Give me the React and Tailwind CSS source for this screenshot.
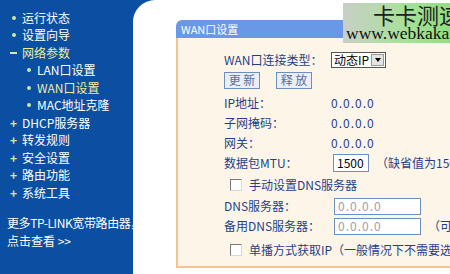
const font = { fontFamily: '"Noto Sans CJK SC", "Liberation Sans", sans-serif' }

const menu = [
  { label: '运行状态', mark: 'dot' },
  { label: '设置向导', mark: 'dot' },
  { label: '网络参数', mark: 'minus', active: true },
  { label: 'LAN口设置', mark: 'dot', sub: true },
  { label: 'WAN口设置', mark: 'dot', sub: true, active: true },
  { label: 'MAC地址克隆', mark: 'dot', sub: true },
  { label: 'DHCP服务器', mark: 'plus' },
  { label: '转发规则', mark: 'plus' },
  { label: '安全设置', mark: 'plus' },
  { label: '路由功能', mark: 'plus' },
  { label: '系统工具', mark: 'plus' },
]

const Mark = ({ type }) => {
  if (type === 'minus') return <span className="w-[7px] h-[2px] bg-[#d8e89a]" />
  if (type === 'plus') return <span className="text-[#d8e89a] text-[12px] font-bold leading-none w-[7px]">+</span>
  return <span className="w-[4px] h-[4px] rounded-full bg-[#c8e8a0]" />
}

const Row = ({ label, children }) => (
  <div className="flex items-center h-[20px]">
    <div className="w-[107px] text-[#1f3f8c]">{label}</div>
    {children}
  </div>
)

const Box = () => <span className="w-[12px] h-[12px] border border-[#7a7a7a] border-r-[#d8d8d8] border-b-[#d8d8d8] bg-white" />

export default function App() {
  return (
    <div className="w-[450px] h-[274px] bg-[#0b4fa3] flex overflow-hidden relative text-[12px]" style={font}>
      <div className="w-[133px] shrink-0 pt-[9px] pl-[9px] overflow-hidden whitespace-nowrap text-white">
        {menu.map((m) => (
          <div key={m.label} className={`flex items-center h-[17.5px] gap-[5px] ${m.sub ? 'pl-[16px]' : 'pl-[1px]'}`}>
            <span className="w-[7px] flex items-center justify-center"><Mark type={m.mark} /></span>
            <span className={m.active ? 'text-[#f0ec9a]' : 'text-white'}>{m.label}</span>
          </div>
        ))}
        <div className="mt-[12px] leading-[18px] -ml-[2px]">
          <div className="tracking-[-0.4px]">更多TP-LINK宽带路由器，</div>
          <div>点击查看 &gt;&gt;</div>
        </div>
      </div>
      <div className="flex-1 bg-white rounded-tl-[22px] pt-[20px] pl-[43px]">
        <div className="h-[18px] bg-[#6a98e6] rounded-tl-[6px] text-white text-[11px] flex items-center pl-[5px] whitespace-nowrap">WAN口设置</div>
        <div className="h-[230px] bg-[#fdf6e8] border-l-2 border-b-2 border-[#f3c48e] pl-[46px] pt-[12px] whitespace-nowrap">
          <Row label="WAN口连接类型：">
            <div className="flex items-center h-[16px] border border-[#555] bg-white">
              <span className="px-[2px] text-black leading-none">动态IP</span>
              <span className="w-[13px] h-[12px] mr-[1px] bg-[#e4e4e4] border border-[#999] flex items-center justify-center">
                <span className="border-l-[3px] border-r-[3px] border-t-[4px] border-l-transparent border-r-transparent border-t-black" />
              </span>
            </div>
          </Row>
          <div className="flex items-center h-[20px] gap-[16px]">
            {['更 新', '释 放'].map((b) => (
              <span key={b} className="w-[36px] h-[17px] border border-[#6d8fc0] bg-[#e9eef8] text-[#5a6e96] flex items-center justify-center leading-none">{b}</span>
            ))}
          </div>
          <div className="mt-[3px]">
            <Row label="IP地址："><span className="text-[#1f3f8c] tracking-[1px]">0.0.0.0</span></Row>
            <Row label="子网掩码："><span className="text-[#1f3f8c] tracking-[1px]">0.0.0.0</span></Row>
            <Row label="网关："><span className="text-[#1f3f8c] tracking-[1px]">0.0.0.0</span></Row>
            <Row label="数据包MTU：">
              <span className="ml-[2px] w-[36px] h-[18px] border border-[#6d8fc0] bg-white text-black flex items-center pl-[3px] leading-none">1500</span>
              <span className="ml-[7px] text-[#1f3f8c]">（缺省值为1500，如非必要，请勿修改）</span>
            </Row>
          </div>
          <div className="flex items-center h-[20px] mt-[2px] pl-[6px] gap-[7px] text-[#1f3f8c]">
            <Box />
            <span>手动设置DNS服务器</span>
          </div>
          <div className="mt-[1px]">
            <Row label="DNS服务器：">
              <span className="ml-[3px] w-[87px] h-[17px] border border-[#6d8fc0] bg-white text-[#a0a0a0] flex items-center pl-[3px] leading-none tracking-[1px]">0.0.0.0</span>
            </Row>
            <Row label="备用DNS服务器：">
              <span className="ml-[3px] w-[87px] h-[17px] border border-[#6d8fc0] bg-white text-[#a0a0a0] flex items-center pl-[3px] leading-none tracking-[1px]">0.0.0.0</span>
              <span className="ml-[7px] text-[#1f3f8c]">（可选）</span>
            </Row>
          </div>
          <div className="flex items-center h-[20px] mt-[4px] pl-[6px] gap-[7px] text-[#1f3f8c]">
            <Box />
            <span>单播方式获取IP（一般情况下不需要选择）</span>
          </div>
        </div>
      </div>
      <div className="absolute left-[343px] top-[3px] w-[120px] h-[40px] bg-gradient-to-r from-[#c9cfc6] via-[#a8e09a] to-[#86e07a] whitespace-nowrap" style={{ fontFamily: '"Liberation Serif", "Noto Sans CJK SC", serif' }}>
        <div className="text-[22px] leading-[22px] pl-[30px] text-[#202020]" style={{ fontFamily: '"Noto Sans CJK SC", serif' }}>卡卡测速网</div>
        <div className="text-[17.5px] leading-[17px] pl-[3px] text-[#101010]">www.webkaka.com</div>
      </div>
    </div>
  )
}
